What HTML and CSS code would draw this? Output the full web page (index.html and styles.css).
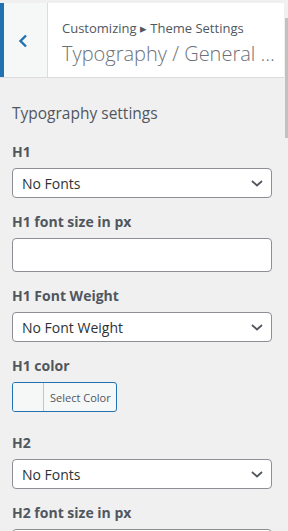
FILE: index.html
```html
<!DOCTYPE html>
<html lang="en">
<head>
<meta charset="utf-8">
<title>Customizer - Typography</title>
<link rel="stylesheet" href="styles.css">
</head>
<body>
<div class="panel">
  <header class="section-head">
    <button class="back" aria-label="Back">
      <svg width="10" height="14" viewBox="0 0 10 14"><path d="M8 1.5 L2.5 7 L8 12.5" fill="none" stroke="#2271b1" stroke-width="2.4"/></svg>
    </button>
    <div class="titles">
      <span class="crumb">Customizing ▸ Theme Settings</span>
      <h3 class="title">Typography / General …</h3>
    </div>
  </header>

  <main class="controls">
    <h4 class="group-title">Typography settings</h4>

    <div class="control">
      <label class="label">H1</label>
      <div class="select"><span>No Fonts</span><svg width="12" height="7" viewBox="0 0 12 7"><path d="M1 1 L6 5.5 L11 1" fill="none" stroke="#50575e" stroke-width="1.8"/></svg></div>
    </div>

    <div class="control">
      <label class="label">H1 font size in px</label>
      <div class="input"></div>
    </div>

    <div class="control">
      <label class="label">H1 Font Weight</label>
      <div class="select"><span>No Font Weight</span><svg width="12" height="7" viewBox="0 0 12 7"><path d="M1 1 L6 5.5 L11 1" fill="none" stroke="#50575e" stroke-width="1.8"/></svg></div>
    </div>

    <div class="control control-color">
      <label class="label">H1 color</label>
      <div class="color-btn"><span class="swatch"></span><span class="color-text">Select Color</span></div>
    </div>

    <div class="control">
      <label class="label">H2</label>
      <div class="select"><span>No Fonts</span><svg width="12" height="7" viewBox="0 0 12 7"><path d="M1 1 L6 5.5 L11 1" fill="none" stroke="#50575e" stroke-width="1.8"/></svg></div>
    </div>

    <div class="control">
      <label class="label">H2 font size in px</label>
      <div class="input"></div>
    </div>
  </main>
  <div class="scroll-thumb"></div>
</div>
</body>
</html>
```

FILE: styles.css
```css
* { box-sizing: border-box; }
html, body { margin: 0; padding: 0; }
body {
  background: #f0f0f1;
  font-family: "Open Sans", "Noto Sans", sans-serif;
  width: 288px;
  height: 531px;
  overflow: hidden;
}
.panel {
  position: relative;
  width: 288px;
  height: 531px;
  padding-top: 3px;
  padding-right: 4px;
  overflow: hidden;
}
.section-head {
  display: flex;
  height: 75px;
  background: #fff;
  border-bottom: 1px solid #dcdcde;
}
.back {
  width: 48px;
  flex: none;
  background: #f6f7f7;
  border: 0;
  border-left: 4px solid #2271b1;
  border-right: 1px solid #dcdcde;
  padding: 0;
  margin: 0;
  display: flex;
  align-items: center;
  justify-content: center;
}
.back svg { margin-left: -5px; margin-top: 1px; }
.titles {
  flex: 1;
  min-width: 0;
  padding: 15px 10px 0 14px;
  display: flex;
  flex-direction: column;
}
.crumb {
  font-size: 13px;
  line-height: 20px;
  color: #50575e;
  white-space: nowrap;
}
.title {
  margin: 3px 0 0;
  font-size: 20px;
  line-height: 26px;
  font-weight: 300;
  color: #6d7177;
  white-space: nowrap;
  overflow: hidden;
}
.controls {
  padding: 25px 12px 0;
}
.group-title {
  margin: 0 0 17px;
  font-size: 15.5px;
  line-height: 20px;
  font-weight: 400;
  color: #50575e;
}
.control { margin-bottom: 12px; }
.control-color { margin-bottom: 19px; }
.label {
  display: block;
  font-size: 14px;
  line-height: 24px;
  font-weight: 700;
  color: #50575e;
  margin-bottom: 4px;
}
.select {
  height: 30px;
  width: 260px;
  background: #fff;
  border: 1px solid #8c8f94;
  border-radius: 4px;
  display: flex;
  align-items: center;
  justify-content: space-between;
  padding: 0 8px 0 9px;
  font-size: 14px;
  color: #2c3338;
}
.input {
  height: 34px;
  width: 260px;
  background: #fff;
  border: 1px solid #8c8f94;
  border-radius: 4px;
}
.color-btn {
  display: flex;
  width: 105px;
  height: 30px;
  border: 1px solid #2271b1;
  border-radius: 3px;
  background: #f6f7f7;
  overflow: hidden;
}
.swatch {
  width: 31px;
  flex: none;
  border-right: 1px solid #c3c4c7;
  background: #f6f7f7;
}
.color-text {
  flex: 1;
  display: flex;
  align-items: center;
  padding-left: 6px;
  font-size: 11px;
  color: #50575e;
}
.scroll-thumb {
  position: absolute;
  right: 0;
  top: 18px;
  width: 3px;
  height: 120px;
  background: #c1c1c1;
}
```
